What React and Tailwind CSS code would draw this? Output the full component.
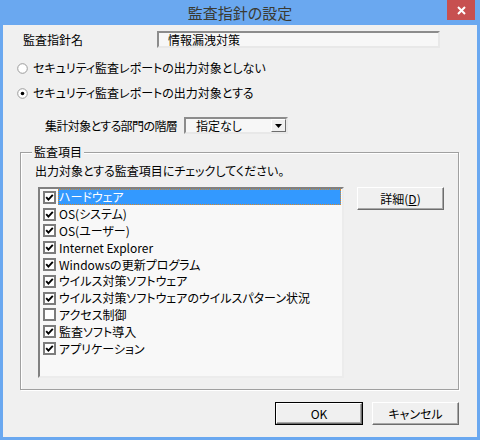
import React from "react";

const items = [
  { label: "ハードウェア", checked: true, selected: true },
  { label: "OS(システム)", checked: true },
  { label: "OS(ユーザー)", checked: true },
  { label: "Internet Explorer", checked: true },
  { label: "Windowsの更新プログラム", checked: true },
  { label: "ウイルス対策ソフトウェア", checked: true },
  { label: "ウイルス対策ソフトウェアのウイルスパターン状況", checked: true },
  { label: "アクセス制御", checked: false },
  { label: "監査ソフト導入", checked: true },
  { label: "アプリケーション", checked: true },
];

const sunken =
  "border-2 border-t-[#8c8c8c] border-l-[#8c8c8c] border-b-[#e8e8e8] border-r-[#e8e8e8]";

const Radio = ({ checked }) => (
  <svg width="11" height="11" viewBox="0 0 11 11" className="shrink-0">
    <circle cx="5.5" cy="5.5" r="4.8" fill="#fff" stroke="#9a9a9a" strokeWidth="1" />
    {checked && <circle cx="5.5" cy="5.5" r="1.8" fill="#000" />}
  </svg>
);

const CheckBox = ({ checked }) => (
  <div className="w-[13px] h-[13px] shrink-0 border-2 border-[#7c7c7c] bg-white flex items-center justify-center">
    {checked && (
      <svg width="9" height="9" viewBox="0 0 9 9">
        <polyline points="1.2,4.2 3.4,6.6 7.8,1.8" fill="none" stroke="#000" strokeWidth="1.9" />
      </svg>
    )}
  </div>
);

const Button = ({ children, isDefault, className = "" }) => (
  <div
    className={`${className} h-[23px] flex ${isDefault ? "border border-black" : ""}`}
  >
    <div className="flex-1 flex items-center justify-center bg-[#f0f0f0] border border-t-white border-l-white border-b-[#6d6d6d] border-r-[#6d6d6d] shadow-[inset_-1px_-1px_0_#a8a8a8]">
      {children}
    </div>
  </div>
);

export default function App() {
  return (
    <div className="w-[480px] h-[440px] bg-[#6aa8f0] flex flex-col text-[12px] leading-[14px] text-black font-['Noto_Sans_CJK_JP',sans-serif] [font-feature-settings:'palt']">
      {/* Title bar */}
      <div className="h-[25px] relative flex items-center justify-center">
        <span className="text-[15px] leading-[20px] text-[#3a3a32]">監査指針の設定</span>
        <div className="absolute top-0 right-[5px] w-[28px] h-[20px] bg-[#c75050] flex items-center justify-center">
          <svg width="9" height="9" viewBox="0 0 9 9">
            <path d="M1 1 L8 8 M8 1 L1 8" stroke="#fff" strokeWidth="2" />
          </svg>
        </div>
      </div>

      {/* Client area */}
      <div className="mx-[3px] mb-[3px] flex-1 bg-[#f0f0f0] flex flex-col whitespace-nowrap">
        <div className="mt-[6px] h-[17px] flex items-center">
          <span className="ml-[20px] w-[134px] shrink-0">監査指針名</span>
          <div className={`w-[283px] h-[17px] ${sunken} bg-[#f7f7f7] pl-[9px] flex items-center`}>
            情報漏洩対策
          </div>
        </div>

        <div className="mt-[12px] h-[16px] flex items-center ml-[14px] gap-[5px]">
          <Radio />
          <span>セキュリティ監査レポートの出力対象としない</span>
        </div>
        <div className="mt-[9px] h-[16px] flex items-center ml-[14px] gap-[5px]">
          <Radio checked />
          <span>セキュリティ監査レポートの出力対象とする</span>
        </div>

        <div className="mt-[16px] h-[17px] flex items-center">
          <span className="ml-[42px] w-[139px] shrink-0 tracking-[-0.6px]">集計対象とする部門の階層</span>
          <div className={`w-[104px] h-[17px] shrink-0 ${sunken} bg-[#f7f7f7] flex items-center`}>
            <span className="flex-1 pl-[10px]">指定なし</span>
            <div className="w-[15px] h-[13px] bg-[#f0f0f0] border border-t-white border-l-white border-b-[#6d6d6d] border-r-[#6d6d6d] flex items-center justify-center">
              <svg width="7" height="4" viewBox="0 0 7 4">
                <path d="M0 0 H7 L3.5 4 Z" fill="#000" />
              </svg>
            </div>
          </div>
        </div>

        {/* Group box */}
        <div className="mt-[18px] ml-[17px] mr-[18px] h-[238px] relative border border-[#a0a0a0] shadow-[inset_1px_1px_0_#fff,1px_1px_0_#fff] flex flex-col">
          <span className="absolute left-[11px] -top-[8px] px-[2px] bg-[#f0f0f0]">監査項目</span>
          <div className="mt-[11px] ml-[14px] h-[14px]">出力対象とする監査項目にチェックしてください。</div>
          <div className="mt-[9px] ml-[17px] flex items-start gap-[13px]">
            <div className="w-[306px] h-[191px] border-2 border-t-[#808080] border-l-[#808080] border-b-[#ececec] border-r-[#ececec] bg-[#f8f8f8] flex flex-col">
              {items.map((it) => (
                <div key={it.label} className="h-[16.8px] shrink-0 flex items-center">
                  <div className="ml-[3px]">
                    <CheckBox checked={it.checked} />
                  </div>
                  <span
                    className={`ml-[2px] mr-[1px] pl-[1px] h-[16px] flex items-center ${
                      it.selected
                        ? "flex-1 bg-[#3399ff] text-white outline-1 outline-dotted outline-[#d8882a] -outline-offset-1"
                        : ""
                    }`}
                  >
                    {it.label}
                  </span>
                </div>
              ))}
            </div>
            <Button className="w-[87px]">
              <span>
                詳細(<span className="underline">D</span>)
              </span>
            </Button>
          </div>
        </div>

        <div className="mt-[12px] mr-[18px] flex justify-end gap-[9px]">
          <Button isDefault className="w-[88px]">OK</Button>
          <Button className="w-[87px]">キャンセル</Button>
        </div>
      </div>
    </div>
  );
}
